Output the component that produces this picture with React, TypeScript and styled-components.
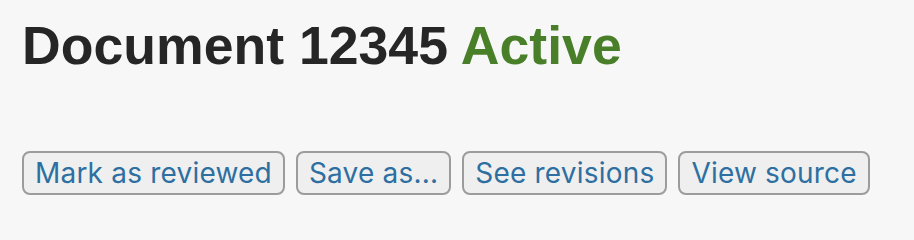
import { createGlobalStyle, styled } from "styled-components";

const GlobalStyle = createGlobalStyle`
  html, body {
    margin: 0;
    padding: 0;
    background: #f7f7f7;
  }
`;

const Page = styled.div`
  padding: 14px 22px;
  font-family: "Liberation Sans", Arial, sans-serif;
`;

const Title = styled.h1`
  margin: 0;
  font-size: 53.6px;
  font-weight: 700;
  color: #262626;
`;

const Status = styled.span`
  color: #4a7f2a;
`;

const Toolbar = styled.div`
  display: flex;
  gap: 11px;
  margin-top: 75px;
`;

const ActionButton = styled.button`
  font-family: Inter, "Noto Sans", sans-serif;
  font-size: 28px;
  line-height: 34px;
  letter-spacing: 0.2px;
  color: #2d6fa1;
  background: #efefef;
  border: 2px solid #9c9c9c;
  border-radius: 8px;
  padding: 3px 11px;
  cursor: pointer;
`;

const actions = ["Mark as reviewed", "Save as...", "See revisions", "View source"];

export default function App() {
  return (
    <Page>
      <GlobalStyle />
      <Title>
        Document 12345 <Status>Active</Status>
      </Title>
      <Toolbar>
        {actions.map((label) => (
          <ActionButton key={label}>{label}</ActionButton>
        ))}
      </Toolbar>
    </Page>
  );
}
